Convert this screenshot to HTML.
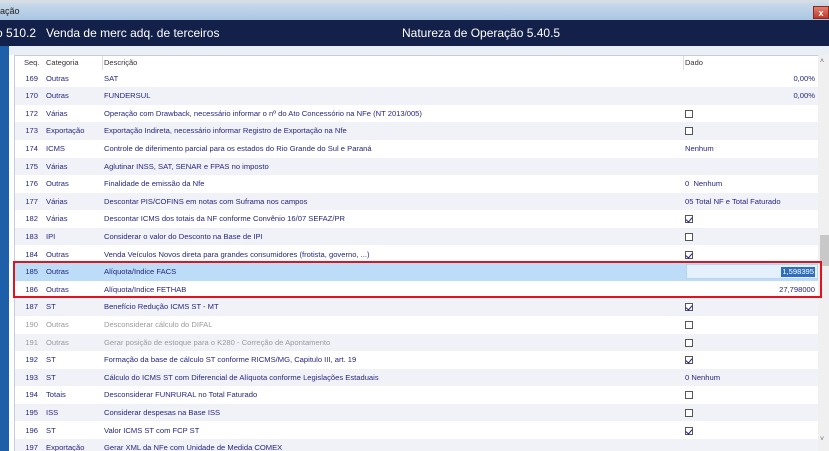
<!DOCTYPE html>
<html><head><meta charset="utf-8"><style>
*{margin:0;padding:0;box-sizing:border-box}
body{width:829px;height:451px;overflow:hidden;position:relative;background:#fff;font-family:"Liberation Sans",Tahoma,sans-serif}
.title{position:absolute;left:0;top:0;width:829px;height:20px;background:linear-gradient(#d8dde3 0,#d8dde3 2px,#c9daea 3px,#a9c6e2 20px);font-size:9px;color:#222;line-height:22px;padding-left:0}
.close{position:absolute;left:813px;top:6px;width:16px;height:13px;background:linear-gradient(#e08070,#c0392b);color:#fff;font-size:9px;font-weight:bold;text-align:center;line-height:13px;border:1px solid #8a2a1e}
.band{position:absolute;left:0;top:20px;width:829px;height:26px;background:#13214a;color:#fff;font-size:12px;line-height:26px}
.strip{position:absolute;left:0;top:46px;width:9px;height:405px;background:#1d5fa8}
.light{position:absolute;left:9px;top:46px;width:820px;height:9px;background:#eaeff6}
.panel{position:absolute;left:14px;top:55px;width:804px;height:396px;border-left:1px solid #c8ccd4;border-top:1px solid #c8ccd4;overflow:hidden}
.hdr{position:absolute;left:0;top:0;width:804px;height:13px;font-size:7.5px;color:#333;line-height:14px;background:#fff}
.hdr span{position:absolute}
.row{position:absolute;left:0;width:804px;height:17.6px;font-size:7.6px;color:#262680;line-height:17.6px}
.row.a{background:#f1f2f8}
.row.g{color:#9a9a9a}
.row span{position:absolute;white-space:nowrap}
.s{left:0;width:23px;text-align:right}
.c{left:31px}
.d{left:89px}
.v{left:670px}
.r{right:4px}
.cb{position:absolute;left:670px;top:5px;width:8px;height:8px;border:1px solid #555;background:#fff}
.cb.k::after{content:"";position:absolute;left:1px;top:0px;width:3px;height:5px;border-right:1.5px solid #1a1a8a;border-bottom:1.5px solid #1a1a8a;transform:rotate(40deg)}
.sel{background:#bcdcf8}
.selcell{position:absolute;left:671px;top:1px;width:132px;height:15px;background:#e4f0fc;border:1px solid #b8d4ee}
.hl{position:absolute;right:2px;top:2px;height:10px;background:#2f6ebd;color:#fff;line-height:10px;padding:0 1px}
.redbox{position:absolute;left:13px;top:261px;width:809px;height:37px;border:2px solid #e0141e}
.sb{position:absolute;left:818px;top:55px;width:11px;height:396px;background:#f0f0f0}
.thumb{position:absolute;left:820px;top:235px;width:9px;height:31px;background:#c8c8c8}
.ar{position:absolute;left:820px;font-size:7px;color:#666}
</style></head><body>
<div class="title">ação</div>
<div class="close">x</div>
<div class="band"><span style="position:absolute;left:-4px">o 510.2&nbsp;&nbsp; Venda de merc adq. de terceiros</span><span style="position:absolute;left:402px">Natureza de Operação 5.40.5</span></div>
<div class="strip"></div>
<div class="light"></div>
<div class="panel">
<div class="hdr"><span style="left:9px">Seq.</span><span style="left:31px">Categoria</span><span style="left:89px;border-left:1px solid #ddd;padding-left:1px;margin-left:-2px">Descrição</span><span style="left:670px;border-left:1px solid #ddd;padding-left:1px;margin-left:-2px">Dado</span></div>
<div class="row" style="top:13.5px"><span class="s">169</span><span class="c">Outras</span><span class="d">SAT</span><span class="r">0,00%</span></div>
<div class="row a" style="top:31.1px"><span class="s">170</span><span class="c">Outras</span><span class="d">FUNDERSUL</span><span class="r">0,00%</span></div>
<div class="row" style="top:48.7px"><span class="s">172</span><span class="c">Várias</span><span class="d">Operação com Drawback, necessário informar o nº do Ato Concessório na NFe (NT 2013/005)</span><i class="cb"></i></div>
<div class="row a" style="top:66.3px"><span class="s">173</span><span class="c">Exportação</span><span class="d">Exportação Indireta, necessário informar Registro de Exportação na Nfe</span><i class="cb"></i></div>
<div class="row" style="top:83.9px"><span class="s">174</span><span class="c">ICMS</span><span class="d">Controle de diferimento parcial para os estados do Rio Grande do Sul e Paraná</span><span class="v">Nenhum</span></div>
<div class="row a" style="top:101.5px"><span class="s">175</span><span class="c">Várias</span><span class="d">Aglutinar INSS, SAT, SENAR e FPAS no imposto</span></div>
<div class="row" style="top:119.1px"><span class="s">176</span><span class="c">Outras</span><span class="d">Finalidade de emissão da Nfe</span><span class="v">0&nbsp; Nenhum</span></div>
<div class="row a" style="top:136.7px"><span class="s">177</span><span class="c">Várias</span><span class="d">Descontar PIS/COFINS em notas com Suframa nos campos</span><span class="v">05 Total NF e Total Faturado</span></div>
<div class="row" style="top:154.3px"><span class="s">182</span><span class="c">Várias</span><span class="d">Descontar ICMS dos totais da NF conforme Convênio 16/07 SEFAZ/PR</span><i class="cb k"></i></div>
<div class="row a" style="top:171.9px"><span class="s">183</span><span class="c">IPI</span><span class="d">Considerar o valor do Desconto na Base de IPI</span><i class="cb"></i></div>
<div class="row" style="top:189.5px"><span class="s">184</span><span class="c">Outras</span><span class="d">Venda Veículos Novos direta para grandes consumidores (frotista, governo, ...)</span><i class="cb k"></i></div>
<div class="row sel" style="top:207.1px"><span class="s">185</span><span class="c">Outras</span><span class="d">Alíquota/Indice FACS</span><div class="selcell"><span class="hl">1,598395</span></div></div>
<div class="row" style="top:224.7px"><span class="s">186</span><span class="c">Outras</span><span class="d">Alíquota/Indice FETHAB</span><span class="r">27,798000</span></div>
<div class="row a" style="top:242.3px"><span class="s">187</span><span class="c">ST</span><span class="d">Benefício Redução ICMS ST - MT</span><i class="cb k"></i></div>
<div class="row g" style="top:259.9px"><span class="s">190</span><span class="c">Outras</span><span class="d">Desconsiderar cálculo do DIFAL</span><i class="cb"></i></div>
<div class="row a g" style="top:277.5px"><span class="s">191</span><span class="c">Outras</span><span class="d">Gerar posição de estoque para o K280 - Correção de Apontamento</span><i class="cb"></i></div>
<div class="row" style="top:295.1px"><span class="s">192</span><span class="c">ST</span><span class="d">Formação da base de cálculo ST conforme RICMS/MG, Capitulo III, art. 19</span><i class="cb k"></i></div>
<div class="row a" style="top:312.7px"><span class="s">193</span><span class="c">ST</span><span class="d">Cálculo do ICMS ST com Diferencial de Alíquota conforme Legislações Estaduais</span><span class="v">0 Nenhum</span></div>
<div class="row" style="top:330.3px"><span class="s">194</span><span class="c">Totais</span><span class="d">Desconsiderar FUNRURAL no Total Faturado</span><i class="cb"></i></div>
<div class="row a" style="top:347.9px"><span class="s">195</span><span class="c">ISS</span><span class="d">Considerar despesas na Base ISS</span><i class="cb"></i></div>
<div class="row" style="top:365.5px"><span class="s">196</span><span class="c">ST</span><span class="d">Valor ICMS ST com FCP ST</span><i class="cb k"></i></div>
<div class="row a" style="top:383.1px"><span class="s">197</span><span class="c">Exportação</span><span class="d">Gerar XML da NFe com Unidade de Medida COMEX</span></div>
</div>
<div class="sb"></div>
<div class="thumb"></div>
<div class="ar" style="top:58px">˄</div>
<div class="ar" style="top:436px">˅</div>
<div class="redbox"></div>
</body></html>
